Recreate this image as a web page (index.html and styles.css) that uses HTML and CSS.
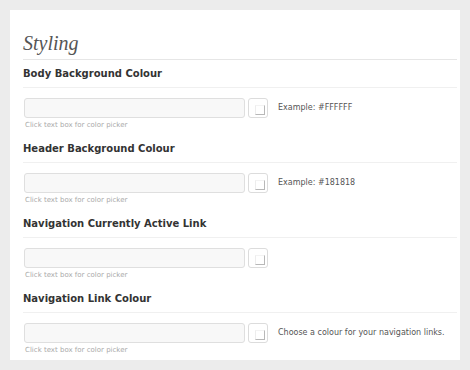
FILE: index.html
```html
<!DOCTYPE html>
<html>
<head>
<meta charset="utf-8">
<link rel="stylesheet" href="styles.css">
</head>
<body>
<div class="panel">
  <h2 class="title">Styling</h2>
  <div class="section">
    <h3 class="section-head">Body Background Colour</h3>
    <div class="option">
      <div class="controls">
        <div class="field-row">
          <div class="input"></div>
          <div class="swatch"><span class="swatch-inner"></span></div>
        </div>
        <div class="hint">Click text box for color picker</div>
      </div>
      <div class="explain">Example: #FFFFFF</div>
    </div>
  </div>
  <div class="section">
    <h3 class="section-head">Header Background Colour</h3>
    <div class="option">
      <div class="controls">
        <div class="field-row">
          <div class="input"></div>
          <div class="swatch"><span class="swatch-inner"></span></div>
        </div>
        <div class="hint">Click text box for color picker</div>
      </div>
      <div class="explain">Example: #181818</div>
    </div>
  </div>
  <div class="section">
    <h3 class="section-head">Navigation Currently Active Link</h3>
    <div class="option">
      <div class="controls">
        <div class="field-row">
          <div class="input"></div>
          <div class="swatch"><span class="swatch-inner"></span></div>
        </div>
        <div class="hint">Click text box for color picker</div>
      </div>
      <div class="explain"></div>
    </div>
  </div>
  <div class="section">
    <h3 class="section-head">Navigation Link Colour</h3>
    <div class="option">
      <div class="controls">
        <div class="field-row">
          <div class="input"></div>
          <div class="swatch"><span class="swatch-inner"></span></div>
        </div>
        <div class="hint">Click text box for color picker</div>
      </div>
      <div class="explain">Choose a colour for your navigation links.</div>
    </div>
  </div>
</div>
</body>
</html>
```
FILE: styles.css
```css
html, body {
  margin: 0;
  padding: 0;
}
body {
  background: #ececec;
  padding: 10px;
  font-family: "DejaVu Sans", Verdana, sans-serif;
}
.panel {
  background: #fff;
  width: 434px;
  height: 350px;
  padding: 0 3px 0 13px;
  overflow: hidden;
}
.title {
  margin: 0;
  box-sizing: border-box;
  height: 50px;
  padding-bottom: 6px;
  border-bottom: 1px solid #e6e6e6;
  font-family: "Liberation Serif", Georgia, serif;
  font-style: italic;
  font-weight: normal;
  font-size: 20px;
  line-height: 20px;
  color: #555;
  display: flex;
  align-items: flex-end;
}
.section {
  height: 75px;
}
.section-head {
  margin: 0;
  height: 27px;
  line-height: 27px;
  border-bottom: 1px solid #f0f0f0;
  font-size: 10px;
  font-weight: bold;
  color: #333;
}
.option {
  display: flex;
  padding-top: 10px;
}
.controls {
  width: 244px;
  padding-left: 1px;
}
.field-row {
  display: flex;
  gap: 3px;
}
.input {
  width: 221px;
  height: 20px;
  box-sizing: border-box;
  background: #f8f8f8;
  border: 1px solid #dfdfdf;
  border-radius: 3px;
}
.swatch {
  width: 20px;
  height: 20px;
  box-sizing: border-box;
  border: 1px solid #dcdcdc;
  border-radius: 3px;
  display: flex;
  align-items: flex-end;
  justify-content: flex-end;
  padding: 0 2px 2px 0;
  background: #fff;
}
.swatch-inner {
  width: 10px;
  height: 10px;
  box-sizing: border-box;
  border-left: 1px solid #ededed;
  border-top: 1px solid #f3f3f3;
  border-right: 1px solid #b8b8b8;
  border-bottom: 1px solid #b8b8b8;
}
.hint {
  font-size: 7px;
  line-height: 14px;
  color: #aaa;
  padding-left: 1px;
}
.explain {
  padding-left: 10px;
  font-size: 8px;
  line-height: 20px;
  color: #555;
  white-space: nowrap;
}
```
